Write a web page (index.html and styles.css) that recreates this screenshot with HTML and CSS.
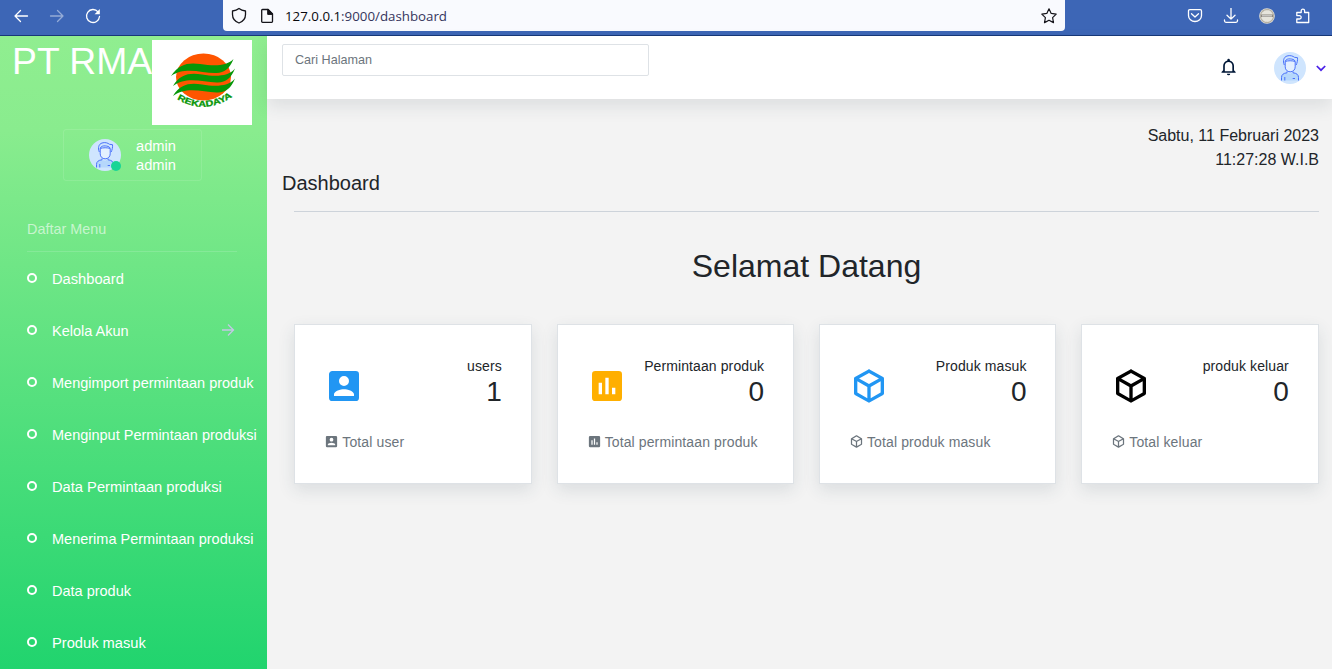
FILE: index.html
```html
<!DOCTYPE html>
<html lang="id">
<head>
<meta charset="utf-8">
<title>Dashboard</title>
<link rel="stylesheet" href="styles.css">
</head>
<body>
<svg class="defs" width="0" height="0">
  <symbol id="cube" viewBox="0 0 24 24"><path d="M21,16.5C21,16.88 20.79,17.21 20.47,17.38L12.57,21.82C12.41,21.94 12.21,22 12,22C11.79,22 11.59,21.94 11.43,21.82L3.53,17.38C3.21,17.21 3,16.88 3,16.5V7.5C3,7.12 3.21,6.79 3.53,6.62L11.43,2.18C11.59,2.06 11.79,2 12,2C12.21,2 12.41,2.06 12.57,2.18L20.47,6.62C20.79,6.79 21,7.12 21,7.5V16.5M12,4.15L6.04,7.5L12,10.85L17.96,7.5L12,4.15M5,15.91L11,19.29V12.58L5,9.21V15.91M19,15.91V9.21L13,12.58V19.29L19,15.91Z"/></symbol>
  <symbol id="account" viewBox="0 0 24 24"><path fill-rule="evenodd" d="M6,17C6,15 10,13.9 12,13.9C14,13.9 18,15 18,17V18H6ZM15,9A3,3 0 0,1 12,12A3,3 0 0,1 9,9A3,3 0 0,1 12,6A3,3 0 0,1 15,9ZM3,5V19A2,2 0 0,0 5,21H19A2,2 0 0,0 21,19V5A2,2 0 0,0 19,3H5C3.89,3 3,3.9 3,5Z"/></symbol>
  <symbol id="chart" viewBox="0 0 24 24"><path fill-rule="evenodd" d="M9,17H7V10H9ZM13,17H11V7H13ZM17,17H15V13H17ZM19,3H5A2,2 0 0,0 3,5V19A2,2 0 0,0 5,21H19A2,2 0 0,0 21,19V5A2,2 0 0,0 19,3Z"/></symbol>
  <symbol id="avatar" viewBox="0 0 32 32">
    <circle cx="16" cy="16" r="16" fill="#cfe5fe"/>
    <path d="M7.500 28.500v-3c0-2.800 2-4.300 5-4.500l1-.5c1 1.600 4.200 1.600 5.200 0l1 .5c3 .2 5 1.700 5 4.500v3z" fill="#b5d7fb"/>
    <path d="M11.300 9v6c0 3 2 5 4.900 5s4.900-2 4.900-5V9z" fill="#e4f0ff"/>
    <g fill="none" stroke="#4a72fa" stroke-width="1">
      <path d="M10.300 13c-1.700-4-.6-8 2.700-9 3-1 6 0 7.500 1.300l3 .4c.3 2.800-.5 5.300-1.300 7.300"/>
      <path d="M11.200 9.500v5.300c0 2.900 2 5 5 5s5-2.100 5-5V9.500c-3-1-7-1-10 0zM11.200 9.200c1-2 3-2.500 5-2.300 2 .2 4 .4 5 2.300"/>
      <path d="M13 19.500v1.300c-3.500.4-5.500 1.800-5.500 4.700v3M19 19.500v1.300c3.500.4 5.500 1.800 5.500 4.700v3M10.800 25v3.500"/>
      <path d="M18.700 26.500h2.300"/>
    </g>
  </symbol>
</svg>
<div class="browser">
  <div class="nav">
    <svg width="16" height="16" viewBox="0 0 16 16"><path d="M14.500 8H2M7.500 2.500 2 8l5.500 5.500"/></svg>
    <svg class="dim" width="16" height="16" viewBox="0 0 16 16"><path d="M1.500 8H14M8.500 2.500 14 8l-5.500 5.500"/></svg>
    <svg width="16" height="16" viewBox="0 0 16 16"><path d="M13 3.800A6.500 6.500 0 1 0 14.500 8.500"/><path class="solid" d="M14.800 1v5.200H9.600z"/></svg>
  </div>
  <div class="address">
    <svg width="16" height="18" viewBox="0 0 16 18"><path d="M8 1.500Q10.500 3.500 14.500 4v3.500c0 4-2.500 7-6.500 8.500C4 14.500 1.500 11.500 1.500 7.500V4Q5.500 3.500 8 1.500z"/></svg>
    <svg class="page" width="14" height="16" viewBox="0 0 14 16"><path d="M2.500 1.500H8L12.500 6v7.500a.8.800 0 0 1-.8.800H2.500a.8.800 0 0 1-.8-.8V2.300a.8.800 0 0 1 .8-.8zM8 1.500V6h4.500"/><path class="ink" d="M8 1.500 12.500 6H8z"/></svg>
    <span class="url"><b>127.0.0.1</b>:9000/dashboard</span>
    <svg class="star" width="18" height="18" viewBox="0 0 18 18"><path d="m9 1.800 2.200 4.600 5 .7-3.600 3.500.9 5L9 13.200l-4.500 2.400.9-5L1.800 7.100l5-.7z"/></svg>
  </div>
  <div class="tools">
    <svg width="16" height="16" viewBox="0 0 16 16"><path d="M2.800 1.700h10.400c.8 0 1.300.5 1.300 1.300V7.500a6.500 6 0 0 1-13 0V3c0-.8.500-1.300 1.300-1.300zM4.500 5.800 8 9l3.500-3.200"/></svg>
    <svg width="16" height="16" viewBox="0 0 16 16"><path d="M8 0v11M4 7.300 8 11.100l4-3.800M1.500 12v.8c0 1 .5 1.500 1.500 1.500h10c1 0 1.500-.5 1.500-1.500V12"/></svg>
    <svg width="16" height="16" viewBox="0 0 16 16"><circle cx="8" cy="8" r="7.800" fill="#e6e4dc" stroke="none"/><circle cx="8" cy="8" r="6.500" stroke="#b5b0a4" stroke-dasharray="1.500 1"/><path d="M2 6.500h12v2.500H2z" fill="#8b867d" stroke="none"/><path d="M3.500 7.800h9" stroke="#ddd" stroke-dasharray="1 1"/></svg>
    <svg width="16" height="16" viewBox="0 0 16 16"><path d="M1.800 14.500V11h2.700a1.700 1.700 0 1 0 0-3.400H1.800V4.500h4.400V2.800a1.700 1.700 0 0 1 3.400 0v1.700H13.700v10z"/></svg>
  </div>
</div>
<div class="app">
  <aside class="sidebar">
    <div class="brand">
      <h1>PT RMA</h1>
      <svg class="logo" width="100" height="85" viewBox="0 0 100 85">
        <path fill="#fff" d="M0 0h100v85H0z"/>
        <ellipse cx="51.500" cy="37" rx="27.500" ry="23.500" fill="#ff5500"/>
        <g fill="#079607">
          <path d="M19 36C27 24 36 22.500 48 24c14 2 26 2.500 33.500-5-4 10-9 13.500-17 14-14 .5-31-7-45.500 3z"/>
          <path d="M21 46C28 34 38 32.500 50 34.500c13 2 26 2.500 33-6-4 10-9 13.500-17 14-14 .5-31-7-45 3.500z"/>
          <path d="M21 56C28 44 38 42.500 50 44.500c13 2 26 2.500 33-6-4 10-9 13.500-17 14-14 .5-31-7-45 3.500z"/>
        </g>
        <path id="arc" d="M25 59Q53 75.500 80 57" fill="none"/>
        <text class="logo-text"><textPath href="#arc" textLength="59" lengthAdjust="spacingAndGlyphs">REKADAYA</textPath></text>
      </svg>
    </div>
    <div class="profile">
      <div class="face"><svg width="32" height="32"><use href="#avatar"/></svg><i class="online"></i></div>
      <div class="who">admin<br>admin</div>
    </div>
    <div class="menu-title">Daftar Menu</div>
    <ul class="menu">
      <li class="wide">Dashboard</li>
      <li>Kelola Akun<svg class="arrow" width="14" height="14" viewBox="0 0 14 14"><path d="M1 7h11M7 1.500 12.500 7 7 12.500"/></svg></li>
      <li>Mengimport permintaan produk</li>
      <li>Menginput Permintaan produksi</li>
      <li class="wide">Data Permintaan produksi</li>
      <li>Menerima Permintaan produksi</li>
      <li>Data produk</li>
      <li class="wide">Produk masuk</li>
    </ul>
  </aside>
  <main class="main">
    <header class="topbar">
      <input class="search" placeholder="Cari Halaman">
      <div class="user">
        <svg class="bell" width="20" height="20" viewBox="0 0 24 24"><path d="M16,17H7V10.500C7,8 9,6 11.500,6C14,6 16,8 16,10.500M18,16V10.500C18,7.430 15.860,4.860 13,4.180V3.500A1.500,1.500 0 0,0 11.500,2A1.500,1.500 0 0,0 10,3.500V4.180C7.130,4.860 5,7.430 5,10.500V16L3,18V19H20V18M11.500,22A2,2 0 0,0 13.500,20H9.500A2,2 0 0,0 11.500,22Z" fill-rule="evenodd"/></svg>
        <svg width="32" height="32"><use href="#avatar"/></svg>
        <svg class="chevron" width="10" height="7" viewBox="0 0 10 7"><path d="m.8 1 4.200 4.200L9.200 1"/></svg>
      </div>
    </header>
    <section class="content">
      <div class="date">Sabtu, 11 Februari 2023<br>11:27:28 W.I.B</div>
      <h2>Dashboard</h2>
      <div class="body">
        <h3>Selamat Datang</h3>
        <div class="cards">
          <article class="card blue">
            <div class="top"><svg class="big"><use href="#account"/></svg><div class="stat">users<strong>1</strong></div></div>
            <p><svg class="small"><use href="#account"/></svg>Total user</p>
          </article>
          <article class="card amber">
            <div class="top"><svg class="big"><use href="#chart"/></svg><div class="stat">Permintaan produk<strong>0</strong></div></div>
            <p><svg class="small"><use href="#chart"/></svg>Total permintaan produk</p>
          </article>
          <article class="card blue">
            <div class="top"><svg class="big"><use href="#cube"/></svg><div class="stat">Produk masuk<strong>0</strong></div></div>
            <p><svg class="small"><use href="#cube"/></svg>Total produk masuk</p>
          </article>
          <article class="card black">
            <div class="top"><svg class="big"><use href="#cube"/></svg><div class="stat">produk keluar<strong>0</strong></div></div>
            <p><svg class="small"><use href="#cube"/></svg>Total keluar</p>
          </article>
        </div>
      </div>
    </section>
  </main>
</div>
</body>
</html>
```

FILE: styles.css
```css
*, *::before { box-sizing: border-box; }
body { margin: 0; height: 669px; overflow: hidden; display: flex; flex-direction: column; font-family: "Liberation Sans", Arial, sans-serif; font-size: 14px; color: #212529; }
svg { display: block; flex: none; }
h1, h2, h3, p, ul { margin: 0; padding: 0; font-weight: 400; }
.defs { position: absolute; }

.browser { height: 36px; flex: none; display: flex; align-items: flex-start; background: #3d66b6; border-bottom: 1px solid #173878; }
.nav { width: 223px; height: 32px; padding-left: 13px; display: flex; align-items: center; gap: 20px; }
.nav svg, .tools svg { fill: none; stroke: #fff; stroke-width: 1.300; stroke-linecap: round; stroke-linejoin: round; }
.nav .dim { opacity: .45; }
.nav .solid { fill: #fff; stroke: none; }
.address { width: 842px; height: 31px; padding: 0 7px 0 8px; display: flex; align-items: center; background: #f9fafe; border-radius: 0 0 4px 4px; }
.address svg { fill: none; stroke: #15141a; stroke-width: 1.300; stroke-linejoin: round; }
.address .page { margin-left: 13px; }
.address .star { stroke-width: 1.200; }
.address .ink { fill: #15141a; }
.url { flex: 1; padding: 1px 0 0 11px; font: 13.300px "Open Sans", "Noto Sans", sans-serif; color: #35355c; }
.url b { font-weight: 400; color: #08080d; }
.tools { height: 31px; padding-left: 122px; display: flex; align-items: center; gap: 20px; }

.app { flex: 1; display: flex; min-height: 0; }
.sidebar { width: 267px; flex: none; color: #fff; background: linear-gradient(180deg, #90ee90 0%, #89ec8e 15%, #21d46e 100%); }
.brand { display: flex; padding: 4px 0 0 12px; height: 93px; }
.brand h1 { width: 140px; font-size: 37.300px; line-height: 42px; white-space: nowrap; }
.logo-text { font: bold 8.500px "Liberation Sans", Arial, sans-serif; fill: #079607; stroke: #079607; stroke-width: .3; }
.profile { width: 139px; height: 52px; margin-left: 63px; padding-left: 25px; display: flex; align-items: center; gap: 15px; border: 1px solid rgba(255,255,255,.11); border-radius: 3px; font-size: 14.700px; line-height: 19px; }
.who { padding-top: 2px; }
.face { position: relative; }
.online { position: absolute; right: 0; bottom: 0; width: 10px; height: 10px; border-radius: 50%; background: #18d596; }
.menu-title { margin: 39px 30px 0 27px; height: 32px; line-height: 18px; font-size: 14.400px; color: rgba(255,255,255,.6); border-bottom: 1px solid rgba(255,255,255,.14); }
.menu { list-style: none; }
.menu li { height: 52px; padding: 1px 0 0 27px; display: flex; align-items: center; font-size: 14.500px; white-space: nowrap; }
.menu .wide { font-size: 14.700px; }
.menu li::before { content: ""; width: 10px; height: 10px; margin: -2px 15px 0 0; flex: none; border: 2px solid #fff; border-radius: 50%; }
.arrow { margin: -2px 32px 0 auto; fill: none; stroke: #c3c7e6; stroke-width: 1.300; }

.main { flex: 1; display: flex; flex-direction: column; background: #f3f3f3; }
.topbar { height: 63px; padding: 8px 6px 0 15px; display: flex; justify-content: space-between; align-items: flex-start; background: #fff; box-shadow: 0 8px 16px rgba(44,58,64,.1); }
.search { width: 367px; height: 32px; padding: 0 12px; border: 1px solid #dee2e6; border-radius: 2px; background: #fff; font: 12.600px "Liberation Sans", Arial, sans-serif; }
.search::placeholder { color: #6c757d; }
.user { display: flex; align-items: center; height: 48px; }
.bell { margin: -2px 35px 0 0; fill: #001737; }
.chevron { margin-left: 10px; fill: none; stroke: #4a20e8; stroke-width: 1.700; }
.content { padding: 25px 13px 0 15px; }
.date { text-align: right; font-size: 16px; line-height: 24px; }
.content h2 { margin-top: -1px; font-size: 20px; line-height: 24px; }
.body { margin: 16px 0 0 12px; border-top: 1px solid #cdd3da; }
.body h3 { margin-top: 35px; text-align: center; font-size: 32px; line-height: 38px; }
.cards { margin: 39px .2px 0 .3px; display: grid; grid-template-columns: repeat(4, 1fr); gap: 24.800px; }
.card { height: 160px; padding: 31px 29px 0; border: 1px solid #dee2e6; background: #fff; box-shadow: 0 6px 16px rgba(44,62,80,.12); }
.top { height: 72px; display: flex; justify-content: space-between; }
.big { width: 40px; height: 40px; margin-top: 10px; fill: currentColor; }
.blue .big { color: #2196f3; }
.amber .big { color: #ffaf00; }
.black .big { color: #000; }
.stat { text-align: right; line-height: 21px; letter-spacing: .1px; }
.stat strong { display: block; font-size: 28px; line-height: 30px; font-weight: 400; letter-spacing: 0; }
.card p { display: flex; align-items: center; gap: 3px; line-height: 28px; color: #6c757d; letter-spacing: .12px; }
.small { width: 15px; height: 15px; margin-top: -1px; fill: currentColor; }
```
